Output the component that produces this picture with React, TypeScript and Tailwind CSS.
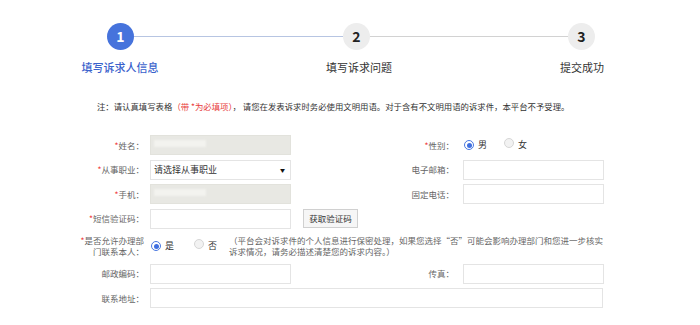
import React from "react";

const Req = () => <span className="text-[#f03c3c]">*</span>;

function Radio({ checked }: { checked?: boolean }) {
  return checked ? (
    <span className="inline-flex w-[10px] h-[10px] rounded-full border border-[#4a78e0] bg-white items-center justify-center">
      <span className="w-[5px] h-[5px] rounded-full bg-[#3f6fe0]" />
    </span>
  ) : (
    <span className="inline-block w-[10px] h-[10px] rounded-full border border-[#d6d6d6] bg-[#f2f2f2]" />
  );
}

function Input({ gray, blur, span }: { gray?: boolean; blur?: boolean; span?: boolean }) {
  return (
    <div
      className={
        "h-[20px] border relative " +
        (gray ? "bg-[#e8e8e3] border-[#e2e2dc]" : "bg-white border-[#e4e4e4]") +
        (span ? " col-span-3 w-[453px]" : " w-[141px]")
      }
    >
      {blur && <div className="absolute left-[3px] top-[4px] w-[52px] h-[7px] bg-[#f3f3ef] blur-[1px]" />}
    </div>
  );
}

export default function App() {
  return (
    <div
      className="w-[700px] h-[325px] bg-white overflow-hidden text-[#333]"
      style={{ fontFamily: '"Noto Sans CJK SC", "Noto Sans", sans-serif' }}
    >
      {/* stepper */}
      <div className="pt-[23px] flex items-center pl-[107px]">
        <div className="w-[27px] h-[27px] rounded-full bg-[#4673dc] text-white flex items-center justify-center text-[14px] font-bold">1</div>
        <div className="w-[209px] h-px bg-[#b7c5e2]" />
        <div className="w-[27px] h-[27px] rounded-full bg-[#ededed] text-[#222] flex items-center justify-center text-[14px] font-bold">2</div>
        <div className="w-[198px] h-px bg-[#d2d2d2]" />
        <div className="w-[27px] h-[27px] rounded-full bg-[#ededed] text-[#222] flex items-center justify-center text-[14px] font-bold">3</div>
      </div>
      <div className="flex mt-[10px] text-[11px] leading-[14px] pl-[70px]">
        <div className="w-[100px] text-center text-[#3a62cc] font-medium">填写诉求人信息</div>
        <div className="w-[139px]" />
        <div className="w-[100px] text-center">填写诉求问题</div>
        <div className="w-[123px]" />
        <div className="w-[100px] text-center">提交成功</div>
      </div>

      {/* note */}
      <div className="mt-[26px] pl-[97px] text-[8.4px] leading-[12px] whitespace-nowrap">
        注：请认真填写表格<span className="text-[#e83c3c]">（带 *为必填项）</span>，&nbsp;请您在发表诉求时务必使用文明用语。对于含有不文明用语的诉求件，本平台不予受理。
      </div>

      {/* form */}
      <div className="mt-[23px] grid grid-cols-[150px_141px_172px_140px] gap-y-[4.5px] items-center text-[8.5px] text-[#666]">
        {/* row 1 */}
        <div className="text-right pr-[6px]"><Req />姓名：</div>
        <Input gray blur />
        <div className="text-right pr-[9px]"><Req />性别：</div>
        <div className="flex items-center text-[#333] text-[9px] pl-[1px]">
          <Radio checked />
          <span className="ml-[4px]">男</span>
          <span className="ml-[17px]"><Radio /></span>
          <span className="ml-[4px]">女</span>
        </div>

        {/* row 2 */}
        <div className="text-right pr-[6px]"><Req />从事职业：</div>
        <div className="h-[20px] w-[141px] border border-[#e4e4e4] bg-white flex items-center justify-between pl-[3px] pr-[5px] text-[#333] text-[9px]">
          <span>请选择从事职业</span>
          <span className="text-[5px] text-[#111]">▼</span>
        </div>
        <div className="text-right pr-[9px]">电子邮箱：</div>
        <Input />

        {/* row 3 */}
        <div className="text-right pr-[6px]"><Req />手机：</div>
        <Input gray blur />
        <div className="text-right pr-[9px]">固定电话：</div>
        <Input />

        {/* row 4 */}
        <div className="text-right pr-[6px]"><Req />短信验证码：</div>
        <Input />
        <div className="pl-[12px]">
          <div className="w-[55px] h-[19px] border border-[#d0d0d0] bg-[#f6f6f6] flex items-center justify-center text-[#333]">获取验证码</div>
        </div>
        <div />

        {/* row 5 */}
        <div className="text-right pr-[6px] leading-[11px]">
          <Req />是否允许办理部<br />门联系本人：
        </div>
        <div className="col-span-3 flex items-center h-[26px]">
          <div className="flex items-center text-[#333] text-[9px] w-[79px] pl-[1px]">
            <Radio checked />
            <span className="ml-[4px]">是</span>
            <span className="ml-[20px]"><Radio /></span>
            <span className="ml-[4px]">否</span>
          </div>
          <div className="leading-[11px] whitespace-nowrap">
            （平台会对诉求件的个人信息进行保密处理，如果您选择“否”可能会影响办理部门和您进一步核实<br />
            诉求情况，请务必描述清楚您的诉求内容。）
          </div>
        </div>

        {/* row 6 */}
        <div className="text-right pr-[6px]">邮政编码：</div>
        <Input />
        <div className="text-right pr-[9px]">传真：</div>
        <Input />

        {/* row 7 */}
        <div className="text-right pr-[6px]">联系地址：</div>
        <Input span />
      </div>
    </div>
  );
}
